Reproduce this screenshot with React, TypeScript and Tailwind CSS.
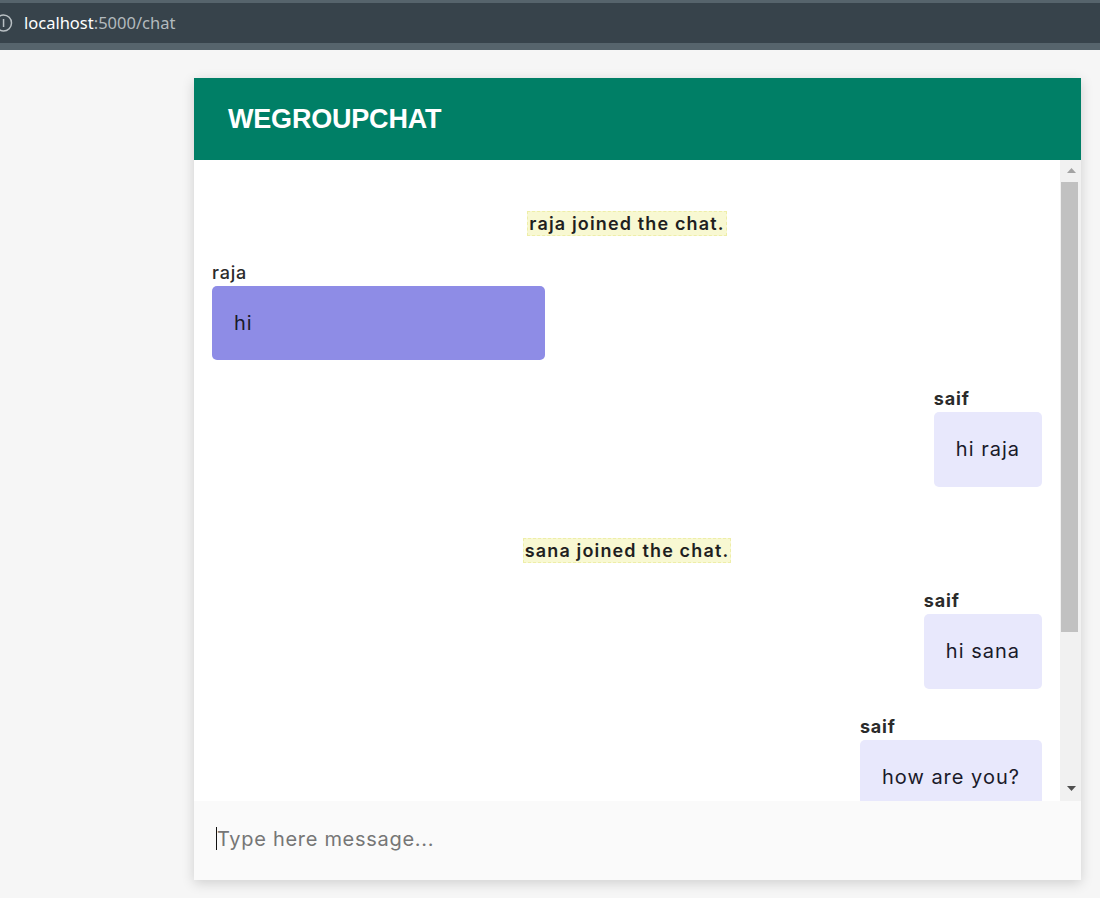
import React from "react";

const font = { fontFamily: "Inter, 'Noto Sans', sans-serif" };

function Notice({ text }: { text: string }) {
  return (
    <div className="flex justify-center">
      <span className="bg-[#f8f8d2] border border-dashed border-[#eeeea8] px-[1px] text-[18px] leading-[23px] font-semibold text-[#1f1f1f] tracking-[1.15px]">
        {text}
      </span>
    </div>
  );
}

function Msg({
  name,
  text,
  mine,
  className,
  bubbleClass,
}: {
  name: string;
  text: string;
  mine?: boolean;
  className?: string;
  bubbleClass?: string;
}) {
  return (
    <div className={`flex flex-col ${mine ? "items-end" : "items-start"} ${className ?? ""}`}>
      <div className="flex flex-col items-start">
        <div
          className={`text-[18px] leading-[22px] mb-[2px] text-[#2b2b2b] tracking-[0.8px] ${mine ? "font-bold" : "font-medium"}`}
        >
          {name}
        </div>
        <div
          className={`rounded-[5px] px-[22px] text-[20px] leading-[27px] tracking-[1px] text-[#1a1a2a] ${
            mine ? "bg-[#e8e8fc] py-[24px]" : "bg-[#8e8ce6] py-[23.5px]"
          } ${bubbleClass ?? ""}`}
        >
          {text}
        </div>
      </div>
    </div>
  );
}

export default function App() {
  return (
    <div className="w-[1100px] h-[898px] bg-[#f6f6f6] overflow-hidden flex flex-col">
      {/* browser bar */}
      <div className="h-[50px] bg-[#56646c] pt-[3px] pb-[7px] flex-none">
        <div className="h-full bg-[#37434b] flex items-center">
          <svg width="14" height="22" viewBox="0 0 14 22" className="flex-none">
            <circle cx="3.5" cy="11" r="8" fill="none" stroke="#b9c0c4" strokeWidth="1.5" />
            <rect x="2.8" y="7" width="1.5" height="8" fill="#b9c0c4" />
          </svg>
          <div
            className="ml-[10px] text-[16.5px] leading-[20px]"
            style={{ fontFamily: "'Noto Sans', 'Open Sans', sans-serif" }}
          >
            <span className="text-white">localhost</span>
            <span className="text-[#b3babe]">:5000/chat</span>
          </div>
        </div>
      </div>

      {/* page */}
      <div className="flex-1 pt-[28px] pl-[194px]">
        <div
          className="w-[887px] h-[802px] flex flex-col bg-white shadow-[0_3px_12px_rgba(0,0,0,0.16)]"
          style={font}
        >
          <div className="h-[82px] flex-none bg-[#007f66] flex items-center pl-[34px]">
            <span
              className="text-white text-[27px] font-bold tracking-[-0.2px]"
              style={{ fontFamily: "'Liberation Sans', Arial, sans-serif" }}
            >
              WEGROUPCHAT
            </span>
          </div>

          <div className="h-[641px] flex-none flex">
            <div className="flex-1 overflow-hidden pl-[18px] pr-[18px] pt-[51px] flex flex-col">
              <Notice text="raja joined the chat." />
              <Msg name="raja" text="hi" className="mt-[26px]" bubbleClass="w-[333px]" />
              <Msg name="saif" text="hi raja" mine className="mt-[28px]" />
              <div className="mt-[51px]">
                <Notice text="sana joined the chat." />
              </div>
              <Msg name="saif" text="hi sana" mine className="mt-[27px]" />
              <Msg name="saif" text="how are you?" mine className="mt-[27px]" />
            </div>
            {/* scrollbar */}
            <div className="w-[21px] flex-none bg-[#f1f1f1] flex flex-col items-center">
              <div className="h-[22px] flex items-center justify-center pl-[1px]">
                <svg width="9" height="6" viewBox="0 0 9 6">
                  <polygon points="4.5,0 9,5 0,5" fill="#a3a3a3" />
                </svg>
              </div>
              <div className="w-[17px] h-[450px] bg-[#c1c1c1] mr-[2px]" />
              <div className="flex-1" />
              <div className="h-[24px] flex items-center justify-center pl-[1px]">
                <svg width="9" height="6" viewBox="0 0 9 6">
                  <polygon points="0,0 9,0 4.5,5" fill="#505050" />
                </svg>
              </div>
            </div>
          </div>

          <div className="h-[79px] flex-none bg-[#fafafa] flex items-center pl-[22px] pb-[4px]">
            <span className="w-[1px] h-[23px] bg-[#111] flex-none" />
            <input
              className="flex-1 bg-transparent outline-none text-[20px] tracking-[0.7px] text-[#222] placeholder:text-[#767676]"
              placeholder="Type here message..."
              style={font}
            />
          </div>
        </div>
      </div>
    </div>
  );
}
